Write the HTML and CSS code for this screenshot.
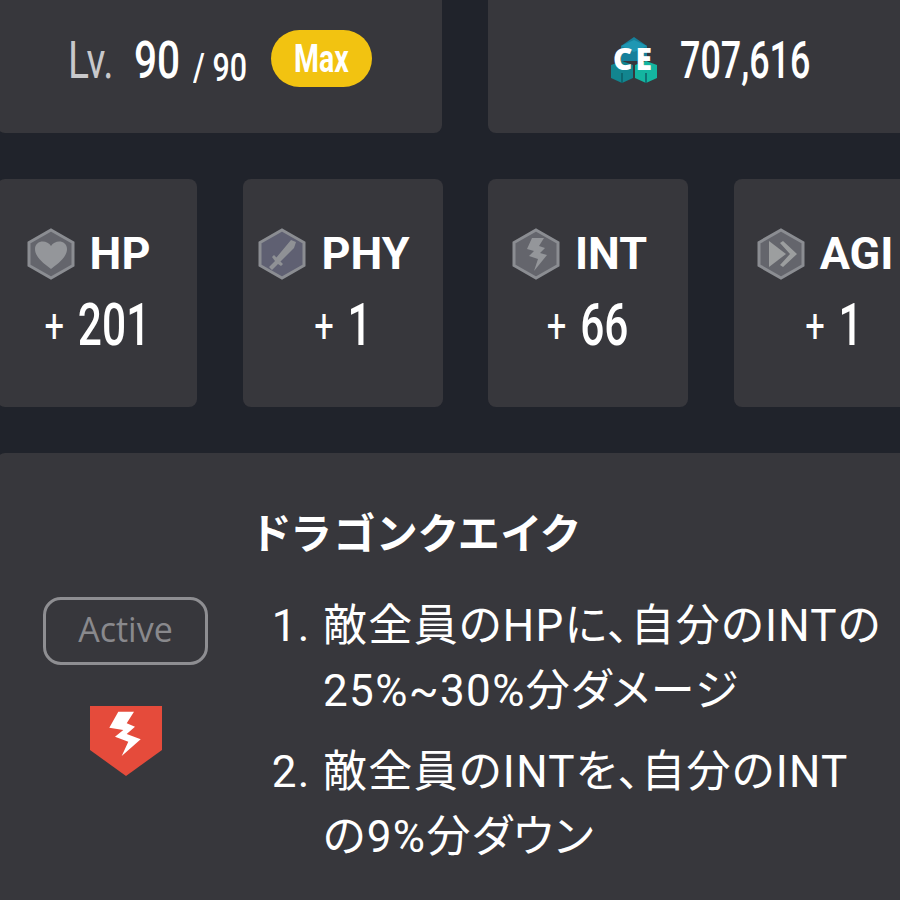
FILE: index.html
```html
<!DOCTYPE html>
<html lang="ja">
<head>
  <meta charset="UTF-8">
  <title>Dragon Quake</title>
  <link rel="stylesheet" href="styles.css">
</head>
<body>
  <div class="page">
    <div class="top-row">
      <div class="card top-card">
        <span class="lv-label">Lv.</span>
        <span class="lv-now">90</span>
        <span class="lv-max">/ 90</span>
        <span class="max-pill"><span class="max-text">Max</span></span>
      </div>
      <div class="card top-card">
        <span class="ce-logo">
          <svg width="46" height="46" viewBox="0 0 46 46">
            <path d="M10 9 23 0 36 9 36 24 10 24Z" fill="#16809b"/>
            <path d="M10 9 23 3 36 9 23 15Z" fill="#1f97b3"/>
            <path d="M0 28 11 24 22 28 22 41 11 46 0 41Z" fill="#12858f"/>
            <path d="M24 28 35 24 46 28 46 41 35 46 24 41Z" fill="#14b5a0"/>
            <path d="M11 36V46M35 36V46" stroke="#0c5d66" stroke-width="1.500"/>
          </svg>
          <span class="ce-text">CE</span>
        </span>
        <span class="gold">707,616</span>
      </div>
    </div>

    <div class="stat-row">
      <div class="card stat-card">
        <div class="stat-head">
          <svg class="hex" viewBox="0 0 48 52">
            <path d="M24 2 46 14.500V37.500L24 50 2 37.500V14.500Z" fill="#64656c" stroke="#8b8d92" stroke-width="3"/>
            <path d="M24 41C13 33 8 27 8 21 8 12 20 11 24 18 28 11 40 12 40 21 40 27 35 33 24 41Z" fill="#94969a"/>
          </svg>
          <span class="stat-name">HP</span>
        </div>
        <div class="stat-value"><span class="plus">+</span><span class="num">201</span></div>
      </div>
      <div class="card stat-card">
        <div class="stat-head">
          <svg class="hex" viewBox="0 0 48 52">
            <path d="M24 2 46 14.500V37.500L24 50 2 37.500V14.500Z" fill="#5f6072" stroke="#8b8d92" stroke-width="3"/>
            <path d="M33 12 38 14 36 20 22 34 18 30ZM14 29 16 27 25 36 23 38 20 36 14 42 11 39 17 33Z" fill="#8f9195"/>
          </svg>
          <span class="stat-name">PHY</span>
        </div>
        <div class="stat-value"><span class="plus">+</span><span class="num">1</span></div>
      </div>
      <div class="card stat-card">
        <div class="stat-head">
          <svg class="hex" viewBox="0 0 48 52">
            <path d="M24 2 46 14.500V37.500L24 50 2 37.500V14.500Z" fill="#64656c" stroke="#8b8d92" stroke-width="3"/>
            <path d="M20 10 32 10 27 18 33 20 28 25 35 27 22 43 26 31 17 28 22 23 15 21Z" fill="#94969a"/>
          </svg>
          <span class="stat-name">INT</span>
        </div>
        <div class="stat-value"><span class="plus">+</span><span class="num">66</span></div>
      </div>
      <div class="card stat-card">
        <div class="stat-head">
          <svg class="hex" viewBox="0 0 48 52">
            <path d="M24 2 46 14.500V37.500L24 50 2 37.500V14.500Z" fill="#64656c" stroke="#8b8d92" stroke-width="3"/>
            <path d="M12 13 29 26 12 39Z" fill="#9c9e9f"/>
            <path d="M26 13 40 26 26 39 23 37 33 26 23 15Z" fill="#9c9e9f"/>
          </svg>
          <span class="stat-name">AGI</span>
        </div>
        <div class="stat-value"><span class="plus">+</span><span class="num">1</span></div>
      </div>
    </div>

    <div class="card skill-card">
      <div class="skill-side">
        <div class="skill-type">Active</div>
        <svg class="skill-icon" width="72" height="70" viewBox="0 0 72 70">
          <path d="M0 0H72V44L36 70 0 44Z" fill="#e54b3b"/>
          <path d="M28.300 5.700 44 5.700 36.700 17.300 45 20.700 36.700 28 50.700 33.300 31.700 50 38.300 35.700 25 30.700 33.300 24 19.300 21.700Z" fill="#fff"/>
        </svg>
      </div>
      <div class="skill-body">
        <h2 class="skill-title">ドラゴンクエイク</h2>
        <ol class="skill-list">
          <li>敵全員のHPに、自分のINTの<br>25%~30%分ダメージ</li>
          <li>敵全員のINTを、自分のINT<br>の9%分ダウン</li>
        </ol>
      </div>
    </div>
  </div>
</body>
</html>
```

FILE: styles.css
```css
html, body {
  margin: 0;
  height: 900px;
  overflow: hidden;
  background-color: #20232b;
}
body {
  font-family: Roboto, "Noto Sans CJK JP", sans-serif;
  color: #fff;
}
.page {
  width: 936px;
  margin: -13px 0 0 -3px;
  display: flex;
  flex-direction: column;
  gap: 46px;
}
.card {
  background-color: #37373c;
  border-radius: 8px;
}
.top-row {
  display: grid;
  grid-template-columns: 445px 445px;
  gap: 46px;
}
.top-card {
  height: 146px;
  display: flex;
  align-items: center;
  justify-content: center;
  white-space: nowrap;
}

/* no condensed font installed, so Roboto is squeezed */
.lv-label, .lv-now, .lv-max, .gold, .max-text {
  display: block;
  transform-origin: left center;
}
.lv-label {
  width: 43px;
  margin-right: 23px;
  font-size: 52px;
  color: #c8c8cb;
  transform: scaleX(.75);
}
.lv-now {
  width: 45px;
  margin-right: 14px;
  font-size: 52px;
  transform: scaleX(.78);
}
.lv-max {
  width: 53px;
  margin: 16px 25px 0 0;
  font-size: 38px;
  transform: scaleX(.8);
}
.max-pill {
  width: 101px;
  height: 57px;
  margin-top: -3px;
  border-radius: 29px;
  background-color: #f2c311;
  display: flex;
  align-items: center;
  justify-content: center;
}
.max-text {
  width: 54px;
  font-size: 39px;
  font-weight: bold;
  transform: scaleX(.73);
}
.ce-logo {
  position: relative;
  width: 46px;
  height: 46px;
  margin-right: 23px;
}
.ce-text {
  position: absolute;
  left: 0;
  right: 0;
  top: 7px;
  text-align: center;
  font-family: "Open Sans", sans-serif;
  font-weight: 800;
  font-size: 30px;
  letter-spacing: 3px;
  line-height: 30px;
}
.gold {
  width: 130px;
  font-size: 52px;
  transform: scaleX(.69);
}
.lv-now, .lv-max, .gold, .num {
  font-weight: 500;
}
.stat-row {
  display: grid;
  grid-template-columns: repeat(4, 200px);
  gap: 45.5px;
}
.stat-card {
  box-sizing: border-box;
  height: 228px;
  padding-bottom: 5px;
  display: flex;
  flex-direction: column;
  align-items: center;
  justify-content: center;
  gap: 11px;
}
.stat-head {
  display: flex;
  align-items: center;
  gap: 14px;
  margin-right: 18px;
}
.hex {
  width: 50px;
  height: 52px;
}
.stat-name {
  font-size: 45px;
  font-weight: 700;
  line-height: 58px;
}
.stat-value {
  display: flex;
  align-items: center;
  gap: 19px;
  transform: scaleX(.72);
}
.plus {
  font-size: 48px;
}
.num {
  font-size: 59px;
  line-height: 62px;
}
.skill-card {
  height: 480px;
  display: flex;
}
.skill-side {
  width: 256px;
  box-sizing: border-box;
  padding: 144px 0 0 46px;
}
.skill-type {
  box-sizing: border-box;
  width: 165px;
  height: 68px;
  border: 3px solid #8e8e92;
  border-radius: 18px;
  font-family: "Open Sans", sans-serif;
  font-size: 34px;
  line-height: 59px;
  text-align: center;
  color: #89898d;
}
.skill-icon {
  display: block;
  margin: 41px 0 0 47px;
}
.skill-title {
  margin: 53px 0 0;
  font-size: 42px;
  font-weight: 700;
  letter-spacing: 2.500px;
  line-height: 58px;
  font-feature-settings: "palt";
}
.skill-list {
  margin: 30px 0 0;
  padding-left: 70px;
  font-size: 44px;
  letter-spacing: 1.350px;
  line-height: 65px;
  white-space: nowrap;
  font-feature-settings: "palt";
}
.skill-list li {
  margin-bottom: 16px;
}
```
